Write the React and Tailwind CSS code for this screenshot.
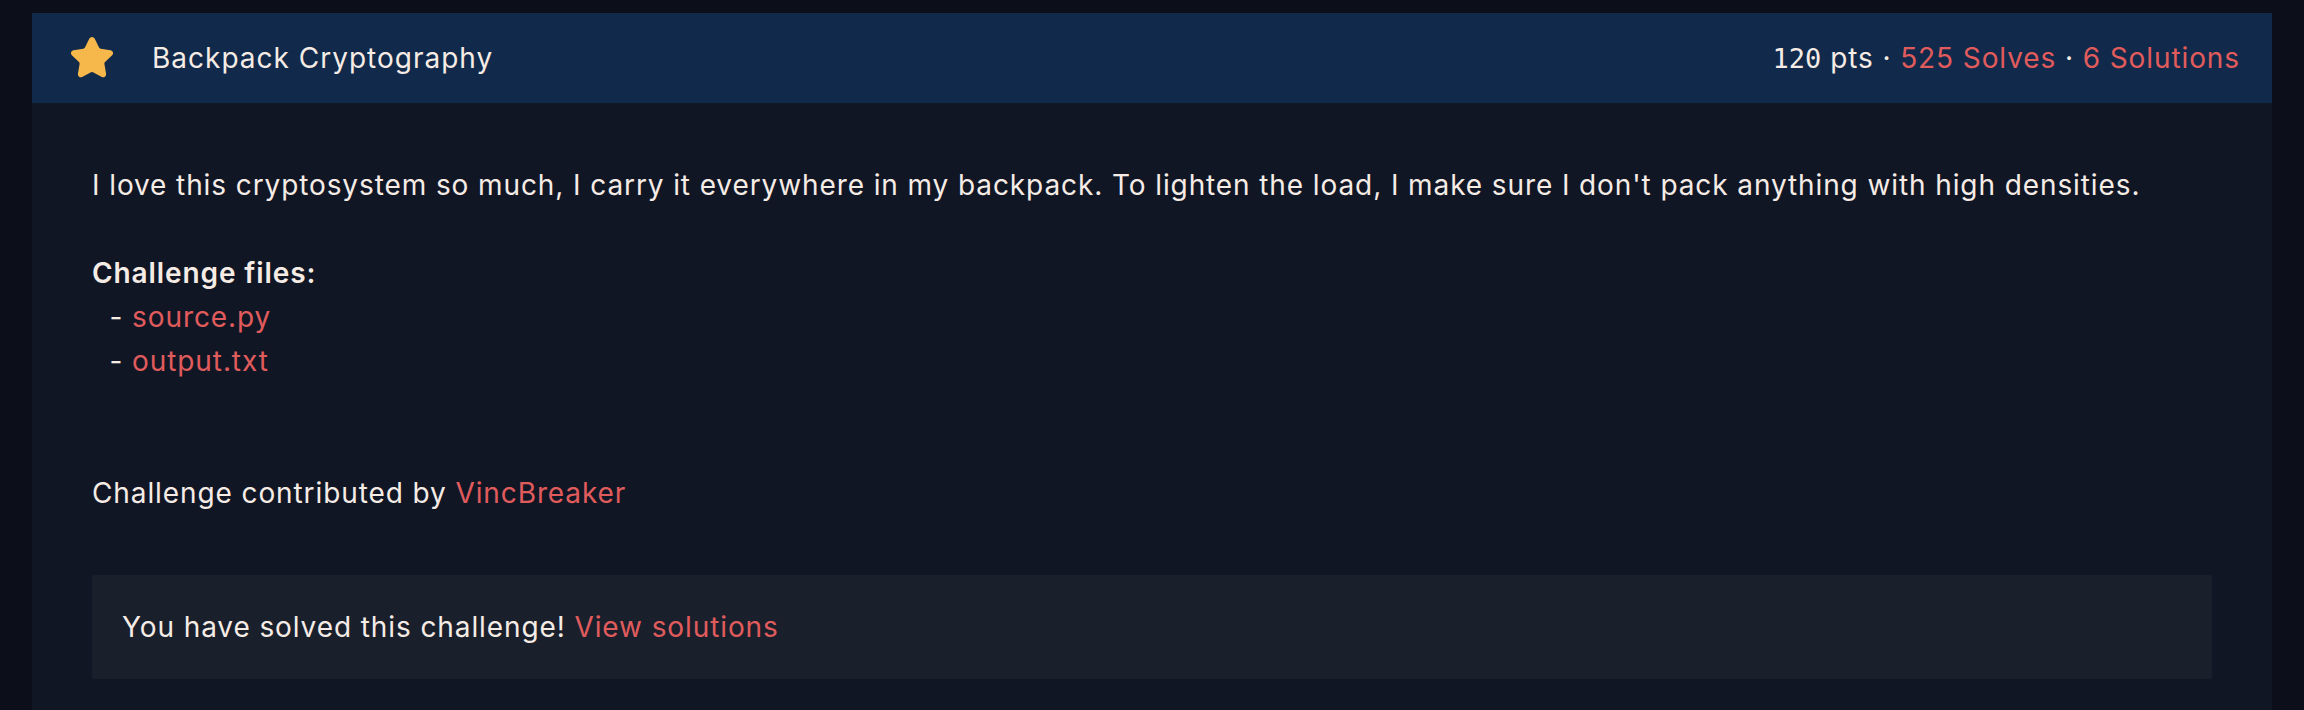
import { Star } from 'lucide-react'

const FILES = ['source.py', 'output.txt']

export default function App() {
  return (
    <div className="min-h-screen bg-[#0c0f1a] px-[32px] pt-[13px] font-['Inter',sans-serif] text-[#f6ece6] tracking-[0.9px]">
      <div className="bg-[#111625] min-h-[700px]">
        {/* header */}
        <div className="h-[90px] flex items-center bg-[#11294a] pl-[37px] pr-[32px]">
          <Star size={46} fill="#f6b84b" color="#f6b84b" strokeWidth={2} />
          <span className="ml-[37px] text-[28px] leading-none tracking-[1px]">Backpack Cryptography</span>
          <div className="ml-auto text-[28px] leading-none whitespace-pre">
            <span className="font-['DejaVu_Sans_Mono',monospace] text-[27px] tracking-normal">120</span>
            <span> pts · </span>
            <span className="text-[#e05c5c]">525 Solves</span>
            <span> · </span>
            <span className="text-[#e05c5c]">6 Solutions</span>
          </div>
        </div>

        {/* body */}
        <div className="p-[60px] text-[28px] leading-[44px]">
          <p>
            I love this cryptosystem so much, I carry it everywhere in my backpack. To lighten the load, I make sure I don't pack anything with high densities.
          </p>
          <p className="mt-[44px] font-semibold">Challenge files:</p>
          {FILES.map(f => (
            <p key={f} className="whitespace-pre">
              {'  - '}<span className="text-[#e05c5c]">{f}</span>
            </p>
          ))}
          <p className="mt-[88px]">
            Challenge contributed by <span className="text-[#e05c5c]">VincBreaker</span>
          </p>

          <div className="mt-[60px] bg-[#1a1f2c] px-[30px] py-[30px] rounded-[2px]">
            You have solved this challenge! <span className="text-[#e05c5c]">View solutions</span>
          </div>
        </div>
      </div>
    </div>
  )
}
